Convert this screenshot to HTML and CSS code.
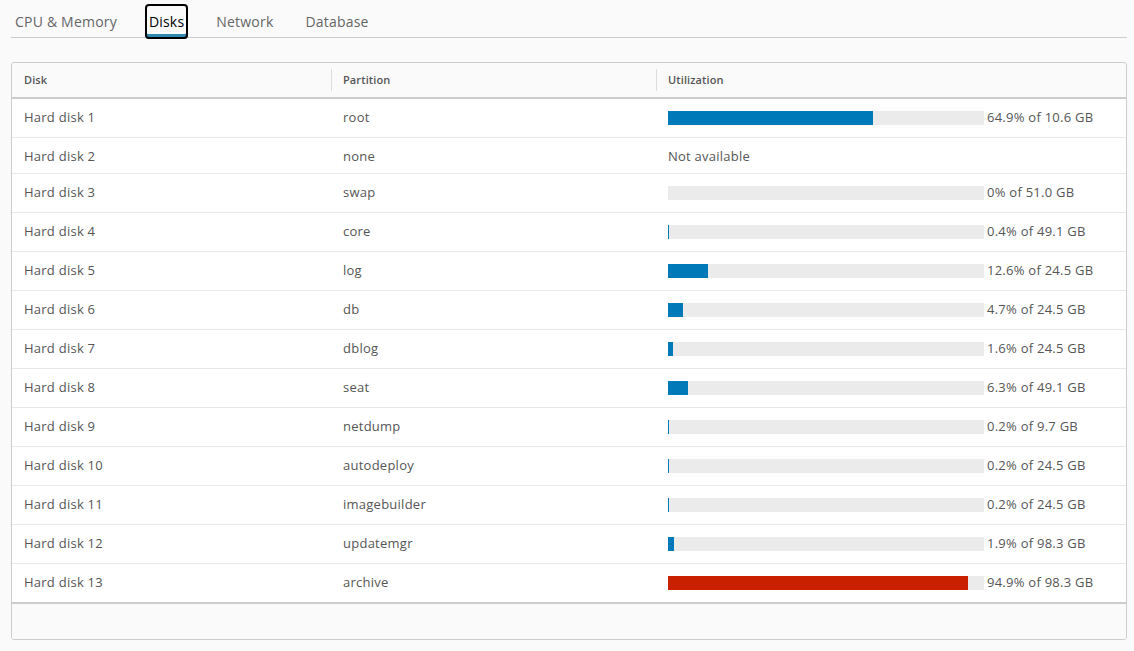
FILE: index.html
```html
<!DOCTYPE html>
<html lang="en">
<head>
  <meta charset="UTF-8">
  <title>Disks</title>
  <link rel="stylesheet" href="styles.css">
</head>
<body>
  <div class="page">
    <ul class="tabs">
      <li class="tab">CPU &amp; Memory</li>
      <li class="tab active">Disks</li>
      <li class="tab">Network</li>
      <li class="tab">Database</li>
    </ul>

    <div class="grid">
      <table>
        <thead>
          <tr>
            <th class="c1">Disk</th>
            <th class="c2 sep">Partition</th>
            <th class="c3 sep">Utilization</th>
          </tr>
        </thead>
        <tbody>
          <tr><td>Hard disk 1</td><td>root</td><td><div class="usage"><div class="bar"><div class="fill" style="width:64.9%"></div></div><span>64.9% of 10.6 GB</span></div></td></tr>
          <tr class="na"><td>Hard disk 2</td><td>none</td><td>Not available</td></tr>
          <tr><td>Hard disk 3</td><td>swap</td><td><div class="usage"><div class="bar"></div><span>0% of 51.0 GB</span></div></td></tr>
          <tr><td>Hard disk 4</td><td>core</td><td><div class="usage"><div class="bar"><div class="fill" style="width:0.4%"></div></div><span>0.4% of 49.1 GB</span></div></td></tr>
          <tr><td>Hard disk 5</td><td>log</td><td><div class="usage"><div class="bar"><div class="fill" style="width:12.6%"></div></div><span>12.6% of 24.5 GB</span></div></td></tr>
          <tr><td>Hard disk 6</td><td>db</td><td><div class="usage"><div class="bar"><div class="fill" style="width:4.7%"></div></div><span>4.7% of 24.5 GB</span></div></td></tr>
          <tr><td>Hard disk 7</td><td>dblog</td><td><div class="usage"><div class="bar"><div class="fill" style="width:1.6%"></div></div><span>1.6% of 24.5 GB</span></div></td></tr>
          <tr><td>Hard disk 8</td><td>seat</td><td><div class="usage"><div class="bar"><div class="fill" style="width:6.3%"></div></div><span>6.3% of 49.1 GB</span></div></td></tr>
          <tr><td>Hard disk 9</td><td>netdump</td><td><div class="usage"><div class="bar"><div class="fill" style="width:0.2%"></div></div><span>0.2% of 9.7 GB</span></div></td></tr>
          <tr><td>Hard disk 10</td><td>autodeploy</td><td><div class="usage"><div class="bar"><div class="fill" style="width:0.2%"></div></div><span>0.2% of 24.5 GB</span></div></td></tr>
          <tr><td>Hard disk 11</td><td>imagebuilder</td><td><div class="usage"><div class="bar"><div class="fill" style="width:0.2%"></div></div><span>0.2% of 24.5 GB</span></div></td></tr>
          <tr><td>Hard disk 12</td><td>updatemgr</td><td><div class="usage"><div class="bar"><div class="fill" style="width:1.9%"></div></div><span>1.9% of 98.3 GB</span></div></td></tr>
          <tr><td>Hard disk 13</td><td>archive</td><td><div class="usage"><div class="bar"><div class="fill danger" style="width:94.9%"></div></div><span>94.9% of 98.3 GB</span></div></td></tr>
        </tbody>
      </table>
      <div class="footer"></div>
    </div>
  </div>
</body>
</html>
```

FILE: styles.css
```css
*{
  margin: 0;
  padding: 0;
  box-sizing: border-box;
}
body{
  background: #fafafa;
  font-family: "Open Sans", sans-serif;
  color: #565656;
}
.page{
  padding: 0 7px 0 11px;
}
.tabs{
  list-style: none;
  display: flex;
  align-items: flex-start;
  height: 38px;
  border-bottom: 1px solid #ccc;
}
.tab{
  margin-top: 4px;
  margin-right: 24px;
  padding: 0 4px;
  height: 35px;
  line-height: 35px;
  font-size: 14px;
  letter-spacing: 0.2px;
  color: #666;
}
.tab.active{
  color: #000;
  outline: 2px solid #000;
  outline-offset: -2px;
  border-radius: 4px;
  box-shadow: inset 0 -5px 0 #2f88b0;
}
.grid{
  margin-top: 24px;
  background: #fff;
  border: 1px solid #ccc;
  border-radius: 3px;
  overflow: hidden;
}
table{
  width: 100%;
  border-collapse: collapse;
  table-layout: fixed;
}
.c1{ width: 319px; }
.c2{ width: 325px; }
th{
  position: relative;
  background: #fafafa;
  text-align: left;
  font-size: 11px;
  font-weight: 600;
  letter-spacing: 0.1px;
  color: #565656;
  height: 35px;
  padding: 0 12px 2px;
  border-bottom: 2px solid #ccc;
}
th.sep::before{
  content: "";
  position: absolute;
  left: 0;
  top: 6px;
  bottom: 6px;
  width: 1px;
  background: #ddd;
}
td{
  font-size: 13px;
  line-height: 13px;
  letter-spacing: 0.25px;
  padding: 12px 12px 11px;
  vertical-align: top;
  border-top: 1px solid #e8e8e8;
  white-space: nowrap;
}
tr.na td{
  padding-bottom: 10px;
}
tbody tr:first-child td{
  border-top: none;
}
.usage{
  display: flex;
  align-items: center;
  height: 16px;
  margin-top: -1px;
}
.usage span{
  margin-top: -2px;
}
.bar{
  width: 316px;
  height: 14px;
  background: #ebebeb;
  margin-right: 3px;
  flex-shrink: 0;
}
.fill{
  height: 100%;
  min-width: 1px;
  background: #0079b8;
}
.fill.danger{
  background: #c92100;
}
.footer{
  height: 37px;
  background: #fafafa;
  border-top: 2px solid #ccc;
}
```
